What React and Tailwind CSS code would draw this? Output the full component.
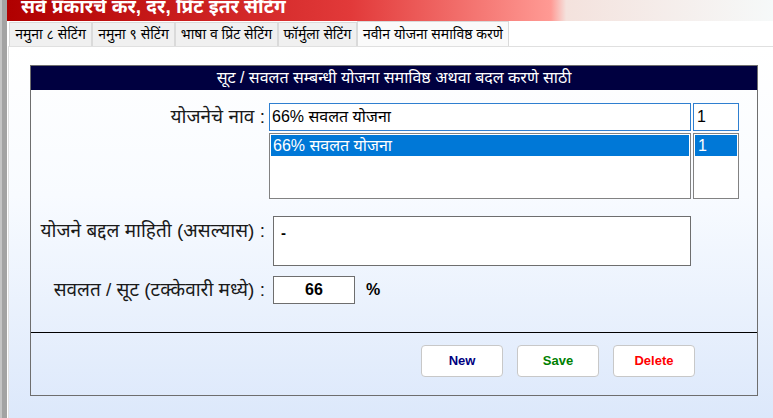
import React from 'react'

const TABS = [
  { label: 'नमुना ८ सेटिंग', w: 'w-[83px]' },
  { label: 'नमुना ९ सेटिंग', w: 'w-[83px]' },
  { label: 'भाषा व प्रिंट सेटिंग', w: 'w-[103px]' },
  { label: 'फॉर्मुला सेटिंग', w: 'w-[79px]' },
]

const FONT = { fontFamily: '"Liberation Sans", "Noto Sans", Arial, sans-serif' }

export default function App() {
  return (
    <div className="w-[773px] h-[418px] flex overflow-hidden bg-white" style={FONT}>
      {/* left frame strip */}
      <div className="w-[7px] h-full bg-[#a3a3a3] border-l-2 border-[#c4c4c4]" />

      <div className="flex-1 flex flex-col min-w-0">
        {/* title bar */}
        <div className="h-[21px] overflow-hidden bg-[linear-gradient(90deg,#b00000_0%,#e23a3a_45%,#ff9a94_71%,#f4e2dd_73%,#f6f9f9_100%)]">
          <div className="-mt-[6px] pl-[14px] text-[19px] font-bold text-white leading-[26px] whitespace-nowrap">
            सर्व प्रकारचे कर, दर, प्रिंट इतर सेटिंग
          </div>
        </div>

        {/* tabs */}
        <div className="h-[25px] flex items-end pl-[2px] bg-white">
          {TABS.map(t => (
            <div
              key={t.label}
              className={`${t.w} h-[24px] flex items-center justify-center bg-[#f0f0f0] border border-[#dadada] border-b-0 text-[14px] text-black whitespace-nowrap`}
            >
              {t.label}
            </div>
          ))}
          <div className="w-[152px] h-[25px] flex items-center justify-center bg-[#fafafa] border border-[#dadada] border-b-0 text-[14px] text-black whitespace-nowrap">
            नवीन योजना समाविष्ठ करणे
          </div>
        </div>

        {/* content panel */}
        <div className="flex-1 ml-[1px] border-t border-l border-[#e0e0e0] bg-[linear-gradient(180deg,#ffffff_0%,#f8fbff_40%,#dce8fb_100%)] pt-[18px] pl-[21px] pr-[15px]">
          <div className="h-[331px] border border-[#6e6e6e] flex flex-col">
            <div className="h-[24px] bg-[#000040] text-white text-[16px] flex items-center justify-center whitespace-nowrap">
              सूट / सवलत सम्बन्धी योजना समाविष्ठ अथवा बदल करणे साठी
            </div>

            <div className="flex-1 flex flex-col pt-[13px]">
              {/* name row */}
              <div className="flex">
                <div className="w-[238px] h-[28px] pr-[4px] flex items-center justify-end text-[19px] text-[#1a1a1a] whitespace-nowrap">
                  योजनेचे नाव :
                </div>
                <div className="w-[422px] h-[28px] border border-[#2f7fd0] bg-white px-[2px] flex items-center text-[16px] text-black">
                  66% सवलत योजना
                </div>
                <div className="w-[46px] h-[28px] ml-[2px] border border-[#2f7fd0] bg-white px-[3px] flex items-center text-[16px] text-black">
                  1
                </div>
              </div>

              {/* list row */}
              <div className="flex mt-[2px]">
                <div className="w-[238px]" />
                <div className="w-[422px] h-[66px] border border-[#828282] bg-white p-[1px]">
                  <div className="h-[21px] bg-[#0078d7] text-white text-[16px] px-[2px] flex items-center">
                    66% सवलत योजना
                  </div>
                </div>
                <div className="w-[46px] h-[66px] ml-[2px] border border-[#828282] bg-white p-[1px]">
                  <div className="h-[21px] bg-[#0078d7] text-white text-[16px] px-[3px] flex items-center">
                    1
                  </div>
                </div>
              </div>

              {/* description row */}
              <div className="flex mt-[17px]">
                <div className="w-[242px] h-[30px] pr-[8px] flex items-center justify-end text-[19px] text-[#1a1a1a] whitespace-nowrap">
                  योजने बद्दल माहिती (असल्यास) :
                </div>
                <div className="w-[418px] h-[50px] border border-[#6e6e6e] bg-white px-[7px] pt-[5px] text-[15px] font-bold text-black">
                  -
                </div>
              </div>

              {/* percent row */}
              <div className="flex items-center mt-[10px]">
                <div className="w-[242px] h-[28px] pr-[8px] flex items-center justify-end text-[19px] text-[#1a1a1a] whitespace-nowrap">
                  सवलत / सूट (टक्केवारी मध्ये) :
                </div>
                <div className="w-[82px] h-[28px] border border-[#6e6e6e] bg-white flex items-center justify-center text-[16px] font-bold text-black">
                  66
                </div>
                <div className="ml-[11px] text-[16px] font-bold text-black">%</div>
              </div>

              <div className="mt-auto border-t border-black h-[63px] flex items-start gap-[14px] pt-[12px] pl-[390px]">
                <button className="w-[82px] h-[32px] bg-white border border-[#c8c8c8] rounded-[4px] text-[13px] font-bold text-[#000080]">
                  New
                </button>
                <button className="w-[82px] h-[32px] bg-white border border-[#c8c8c8] rounded-[4px] text-[13px] font-bold text-[#008000]">
                  Save
                </button>
                <button className="w-[82px] h-[32px] bg-white border border-[#c8c8c8] rounded-[4px] text-[13px] font-bold text-[#ff0000]">
                  Delete
                </button>
              </div>
            </div>
          </div>
        </div>
      </div>
    </div>
  )
}
